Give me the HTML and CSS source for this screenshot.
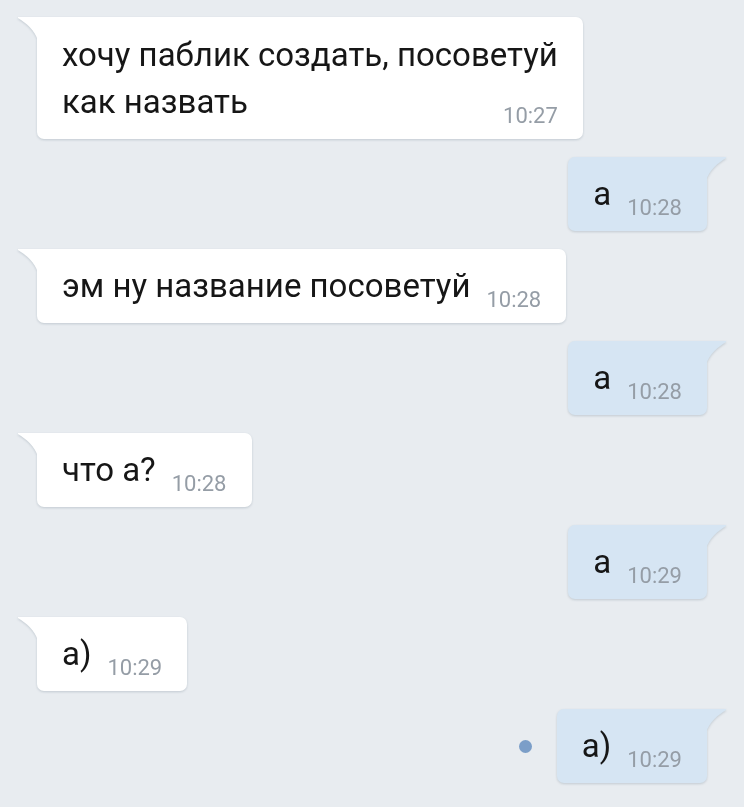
FILE: index.html
```html
<!DOCTYPE html>
<html lang="ru">
<head>
<meta charset="utf-8">
<title>Чат</title>
<link rel="stylesheet" href="styles.css">
</head>
<body>
<div class="chat">
  <div class="row in">
    <div class="bubble multi">
      <span class="text">хочу паблик создать, посоветуй<br>как назвать</span>
      <span class="time">10:27</span>
    </div>
  </div>
  <div class="row out">
    <div class="bubble"><span class="text">а</span><span class="time">10:28</span></div>
  </div>
  <div class="row in">
    <div class="bubble"><span class="text">эм ну название посоветуй</span><span class="time">10:28</span></div>
  </div>
  <div class="row out">
    <div class="bubble"><span class="text">а</span><span class="time">10:28</span></div>
  </div>
  <div class="row in">
    <div class="bubble"><span class="text">что а?</span><span class="time">10:28</span></div>
  </div>
  <div class="row out">
    <div class="bubble"><span class="text">а</span><span class="time">10:29</span></div>
  </div>
  <div class="row in">
    <div class="bubble"><span class="text">а)</span><span class="time">10:29</span></div>
  </div>
  <div class="row out">
    <span class="unread"></span>
    <div class="bubble"><span class="text">а)</span><span class="time">10:29</span></div>
  </div>
</div>
</body>
</html>
```
FILE: styles.css
```css
html, body {
  margin: 0;
  padding: 0;
  background: #e8ecf0;
}
body {
  font-family: Roboto, "Noto Sans", sans-serif;
  width: 744px;
  height: 807px;
  overflow: hidden;
}
.chat {
  display: flex;
  flex-direction: column;
  gap: 18px;
  padding: 17px 0;
}
.row {
  display: flex;
  align-items: center;
}
.row.in {
  justify-content: flex-start;
  padding-left: 37px;
}
.row.out {
  justify-content: flex-end;
  padding-right: 37px;
}
.bubble {
  position: relative;
  display: flex;
  align-items: flex-end;
  padding: 14px 25px 14px 25px;
  border-radius: 7px;
  filter: drop-shadow(0 1px 1px rgba(60, 80, 100, 0.22));
}
.in .bubble {
  background: #ffffff;
  border-top-left-radius: 0;
}
.out .bubble {
  background: #d6e5f3;
  border-top-right-radius: 0;
}
.bubble::before {
  content: "";
  position: absolute;
  top: 0;
  width: 21px;
  height: 24px;
}
.in .bubble::before {
  left: -20px;
  background: #ffffff;
  clip-path: path("M1 0 L21 0 L21 24 C18 13 9 6 1 1 Z");
}
.out .bubble::before {
  right: -20px;
  background: #d6e5f3;
  clip-path: path("M20 0 L0 0 L0 24 C3 13 12 6 20 1 Z");
}
.text {
  font-size: 33px;
  line-height: 46px;
  color: #161616;
}
.multi .text {
  line-height: 47px;
}
.time {
  font-size: 22px;
  line-height: 26px;
  color: #959da6;
  margin-left: 16px;
  margin-bottom: -4px;
}
.bubble.multi {
  display: grid;
}
.multi .text,
.multi .time {
  grid-area: 1 / 1;
}
.multi .time {
  justify-self: end;
  align-self: end;
  margin-left: 0;
}
.unread {
  width: 13px;
  height: 13px;
  border-radius: 50%;
  background: #7b9ec8;
  margin-right: 25px;
}
```
